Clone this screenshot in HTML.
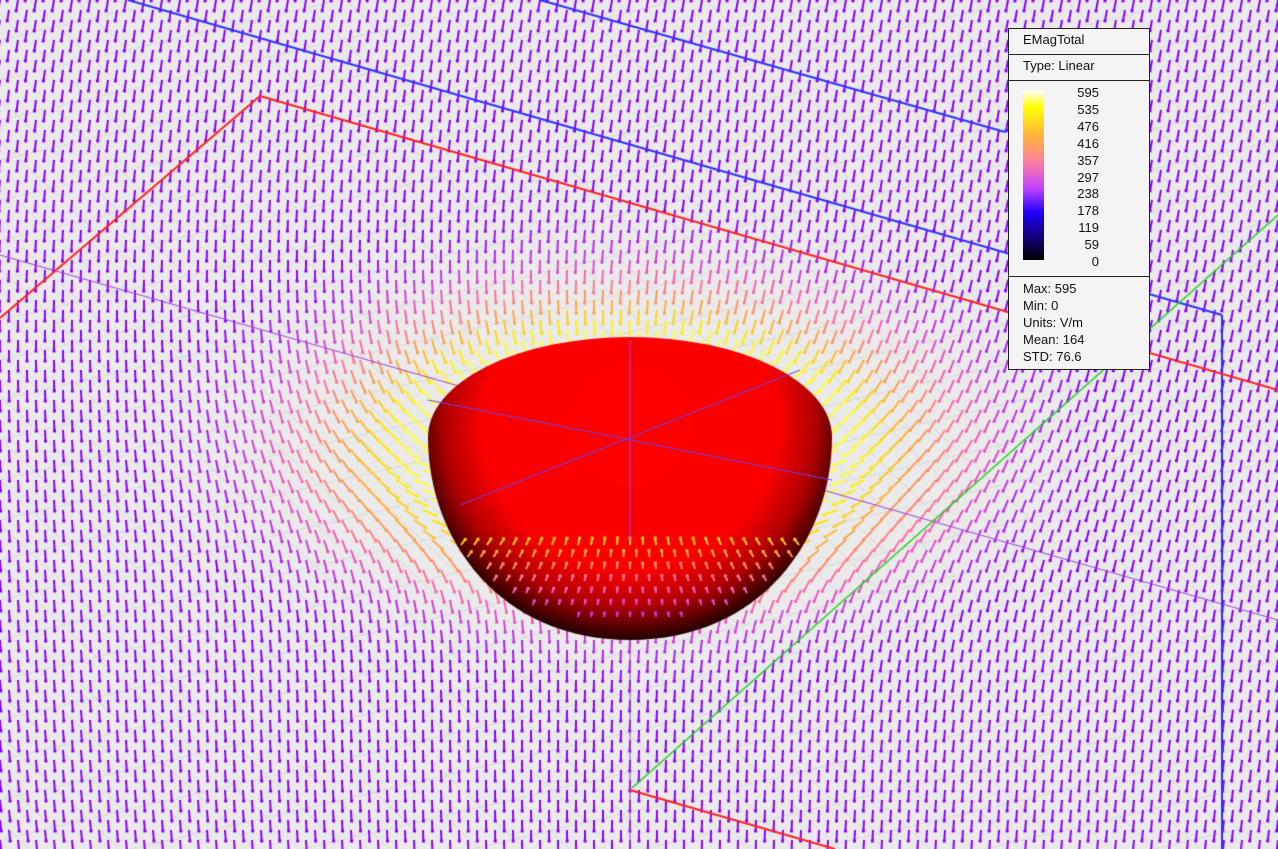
<!DOCTYPE html>
<html><head><meta charset="utf-8"><style>
html,body{margin:0;padding:0;background:#eaeaea;overflow:hidden}
#c{position:absolute;left:0;top:0}
#leg{position:absolute;left:1008px;top:28px;width:140px;height:340px;background:#f4f4f4;border:1px solid #222;font-family:"Liberation Sans",sans-serif;font-size:13px;color:#111}
.s{border-bottom:1px solid #222;padding:3px 14px}
</style></head><body>
<canvas id="c" width="1278" height="849"></canvas>
<div id="leg">
<div class="s" style="height:19px">EMagTotal</div>
<div class="s" style="height:19px">Type: Linear</div>
<div class="s" style="height:189px;position:relative">
<div style="position:absolute;left:14px;top:9px;width:21px;height:170px;background:linear-gradient(#fff,#ff0 10%,#ffb040 28%,#ff80a0 42%,#c040ff 58%,#2000ff 72%,#000 100%)"></div>
<div style="position:absolute;left:50px;top:4px;width:40px;text-align:right;line-height:16.9px">595<br>535<br>476<br>416<br>357<br>297<br>238<br>178<br>119<br>59<br>0</div>
</div>
<div style="padding:3px 14px;line-height:17px">Max: 595<br>Min: 0<br>Units: V/m<br>Mean: 164<br>STD: 76.6</div>
</div>
<script>
const c=document.getElementById('c').getContext('2d');
c.fillStyle='#eaeaea';c.fillRect(0,0,1278,849);
c.strokeStyle='#dadada';c.lineWidth=1;
for(let i=-40;i<60;i++){c.beginPath();c.moveTo(i*45-600,0);c.lineTo(i*45+300,849);c.stroke();
c.beginPath();c.moveTo(0,i*40);c.lineTo(1278,i*40-300);c.stroke();}
function L(x1,y1,x2,y2,col,w){c.strokeStyle=col;c.lineWidth=w;c.beginPath();c.moveTo(x1,y1);c.lineTo(x2,y2);c.stroke();}
const cx=630,cy=440;
function col(t){
 const stops=[[0,[138,0,255]],[0.3,[180,40,245]],[0.55,[255,100,180]],[0.78,[255,170,70]],[0.92,[255,235,0]],[1,[255,255,60]]];
 for(let i=1;i<stops.length;i++)if(t<=stops[i][0]){const a=stops[i-1],b=stops[i];const f=(t-a[0])/(b[0]-a[0]);
 return 'rgb('+a[1].map((v,k)=>Math.round(v+(b[1][k]-v)*f)).join(',')+')';}
 return 'rgb(255,255,60)';}
function arrow(x,y,dx,dy,len,cl,w){c.strokeStyle=cl;c.fillStyle=cl;c.lineWidth=w||2;
 const x2=x+dx*len,y2=y+dy*len;c.beginPath();c.moveTo(x,y);c.lineTo(x2,y2);c.stroke();
 c.fillRect(x2-1.5,y2-1.5,3,3);}
for(let j=-1;j<88;j++)for(let i=-1;i<73;i++){
 const x=i*18+(j%2)*9,y=j*10;
 const ex=(x-cx)/200,ey=(y-cy)/100,r=Math.sqrt(ex*ex+ey*ey);
 if(r<1.02)continue;
 let bx=-0.18*(1-y/849)+0.1*((630-x)/630)*(y/849),by=1;
 let tx=(cx-x)/200,ty=(cy-y)/100;let tl=Math.hypot(tx,ty);tx/=tl;ty/=tl;
 let k=2.2/(r*r*r);
 let dx=bx+tx*k,dy=by+ty*k;let dl=Math.hypot(dx,dy);dx/=dl;dy/=dl;
 const t=Math.max(0,Math.min(1,(2.4-r)/1.25));
 arrow(x,y,dx,dy,11+t*3,col(t),2);
}
L(0,255,1278,620,'#a040e0',1);
L(630,340,630,849,'#a040e0',1);
L(128,0,1222,315,'#3030ff',2);L(1222,315,1222,849,'#3030ff',2);
L(540,0,1005,132,'#3030ff',2);L(1005,132,1030,112,'#3030ff',2);
L(0,318,260,96,'#ff2020',2);L(260,96,1278,390,'#ff2020',2);
L(632,788,1278,215,'#20d020',1.5);L(630,790,835,849,'#ff2020',2);
c.save();
c.beginPath();c.ellipse(630,437,202,100,0,Math.PI,0);
c.bezierCurveTo(832,540,760,640,630,640);c.bezierCurveTo(500,640,428,540,428,437);c.closePath();
c.clip();
c.translate(630,425);c.scale(1,0.98);
let g=c.createRadialGradient(0,0,0,0,0,218);g.addColorStop(0,'#ff0000');g.addColorStop(0.68,'#fa0000');g.addColorStop(0.85,'#b00000');g.addColorStop(1,'#280000');
c.fillStyle=g;c.fillRect(-300,-200,600,450);
c.restore();
for(let j=0;j<8;j++)for(let i=-15;i<=15;i++){const y=545+j*12,x=630+i*13+(j%2)*6.5;
 const ex=(x-630)/190,ey=(y-520)/112;if(ex*ex+ey*ey>0.85)continue;
 const dx=(630-x)*0.004,dy=-0.9;const dl=Math.hypot(dx,dy);
 arrow(x,y,dx/dl,dy/dl,7-j*0.5,col(0.85-j*0.08),2);}
L(630,340,630,540,'#9040ff',1);L(428,400,832,480,'#7040f0',1);L(460,505,800,370,'#7040f0',1);
</script>
</body></html>
